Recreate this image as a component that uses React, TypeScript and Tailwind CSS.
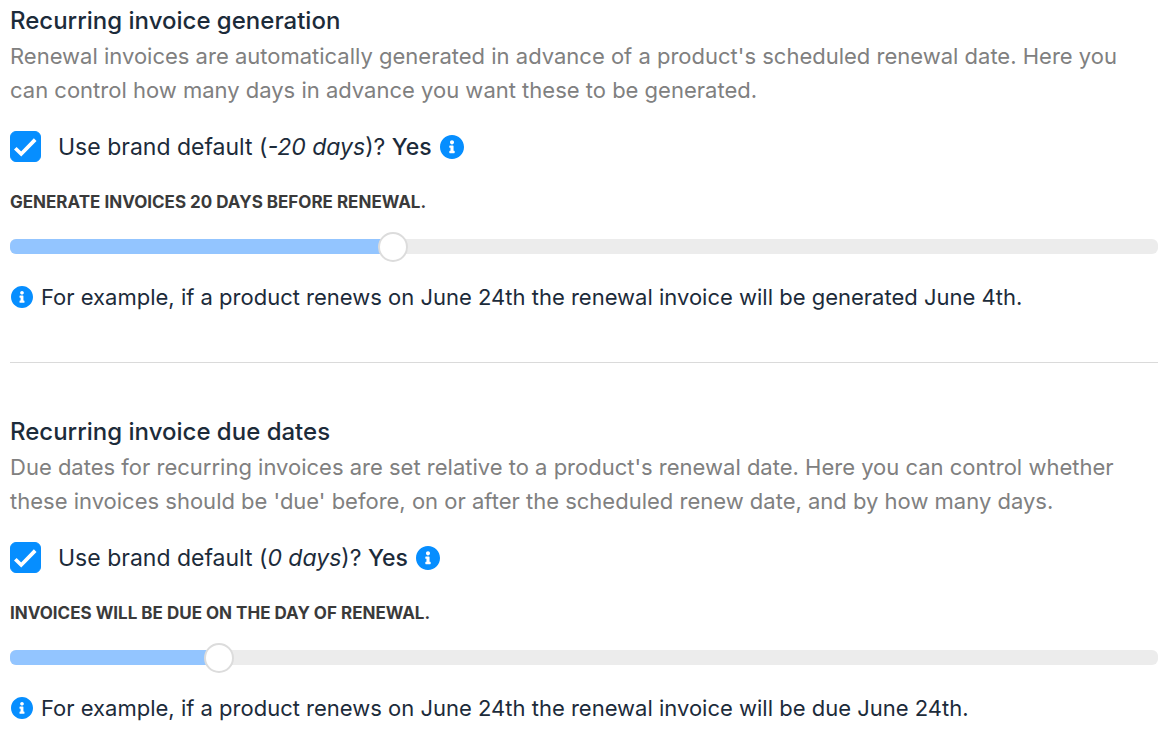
import { useState } from "react";

function InfoIcon({ className }: { className: string }) {
  return (
    <svg viewBox="8 8 496 496" className={className} fill="currentColor" aria-hidden="true">
      <path d="M256 8C119.043 8 8 119.083 8 256c0 136.997 111.043 248 248 248s248-111.003 248-248C504 119.083 392.957 8 256 8zm0 110c23.196 0 42 18.804 42 42s-18.804 42-42 42-42-18.804-42-42 18.804-42 42-42zm56 254c0 6.627-5.373 12-12 12h-88c-6.627 0-12-5.373-12-12v-24c0-6.627 5.373-12 12-12h12v-64h-12c-6.627 0-12-5.373-12-12v-24c0-6.627 5.373-12 12-12h64c6.627 0 12 5.373 12 12v100h12c6.627 0 12 5.373 12 12v24z" />
    </svg>
  );
}

type SectionProps = {
  id: string;
  title: string;
  description: string;
  amount: string;
  caption: string;
  example: string;
  min: number;
  max: number;
  initial: number;
};

function Section({ id, title, description, amount, caption, example, min, max, initial }: SectionProps) {
  const [checked, setChecked] = useState(true);
  const [value, setValue] = useState(initial);
  const ratio = (value - min) / (max - min);

  return (
    <section>
      <h2 className="text-2xl leading-[37px] font-medium text-[#1c2b3a]">{title}</h2>
      <p className="text-[22px] leading-[34px] text-[#808080]">{description}</p>
      <div className="mt-[21px] flex h-[37px] items-center">
        <span className="relative flex size-[31px] shrink-0">
          <input
            id={`${id}-default`}
            type="checkbox"
            checked={checked}
            onChange={(e) => setChecked(e.target.checked)}
            className="peer size-full appearance-none rounded-[6px] border border-[#068eff] bg-white checked:bg-[#068eff]"
          />
          <svg viewBox="0 0 31 31" className="pointer-events-none absolute inset-0 hidden peer-checked:block" fill="none" stroke="white" strokeWidth="3.7" aria-hidden="true">
            <path d="M5.3 17.2 L11.2 23 L25.2 8.6" />
          </svg>
        </span>
        <label htmlFor={`${id}-default`} className="ml-[17px] pt-[2px] text-[23px] leading-[35px] text-[#1c2b3a]">
          Use brand default (<em>{amount}</em>)? <span className="font-medium">{checked ? "Yes" : "No"}</span>
        </label>
        <InfoIcon className="ml-2 size-6 text-[#068eff]" />
      </div>
      <label htmlFor={`${id}-days`} className="mt-[25px] block text-[17px] leading-6 font-bold text-[#3a3a3a] uppercase">
        {caption}
      </label>
      <div className="relative mt-[17px] flex h-[31px] items-center">
        <div className="h-[15px] w-full overflow-hidden rounded-[6px] bg-[#ececec]">
          <div className="h-full bg-[#93c5ff]" style={{ width: `${ratio * 100}%` }} />
        </div>
        <input
          id={`${id}-days`}
          type="range"
          min={min}
          max={max}
          value={value}
          onChange={(e) => setValue(Number(e.target.value))}
          className="absolute inset-y-0 -right-[15px] -left-[15px] appearance-none bg-transparent [&::-webkit-slider-thumb]:size-[30px] [&::-webkit-slider-thumb]:appearance-none [&::-webkit-slider-thumb]:rounded-full [&::-webkit-slider-thumb]:border-2 [&::-webkit-slider-thumb]:border-[#dcdcdc] [&::-webkit-slider-thumb]:bg-white"
        />
      </div>
      <p className="mt-[17px] flex items-center gap-2 pl-px text-[22px] leading-9 text-[#1c2b3a]">
        <InfoIcon className="size-[22px] shrink-0 text-[#068eff]" />
        {example}
      </p>
    </section>
  );
}

export default function App() {
  return (
    <main className="bg-white pt-[2px] pr-4 pl-[10px] font-['Inter',sans-serif]">
      <Section
        id="generation"
        title="Recurring invoice generation"
        description="Renewal invoices are automatically generated in advance of a product's scheduled renewal date. Here you can control how many days in advance you want these to be generated."
        amount="-20 days"
        caption="Generate invoices 20 days before renewal."
        example="For example, if a product renews on June 24th the renewal invoice will be generated June 4th."
        min={0}
        max={60}
        initial={20}
      />
      <hr className="mt-[47px] mb-[50px] border-[#dadada]" />
      <Section
        id="due"
        title="Recurring invoice due dates"
        description="Due dates for recurring invoices are set relative to a product's renewal date. Here you can control whether these invoices should be 'due' before, on or after the scheduled renew date, and by how many days."
        amount="0 days"
        caption="Invoices will be due on the day of renewal."
        example="For example, if a product renews on June 24th the renewal invoice will be due June 24th."
        min={-20}
        max={90}
        initial={0}
      />
    </main>
  );
}
